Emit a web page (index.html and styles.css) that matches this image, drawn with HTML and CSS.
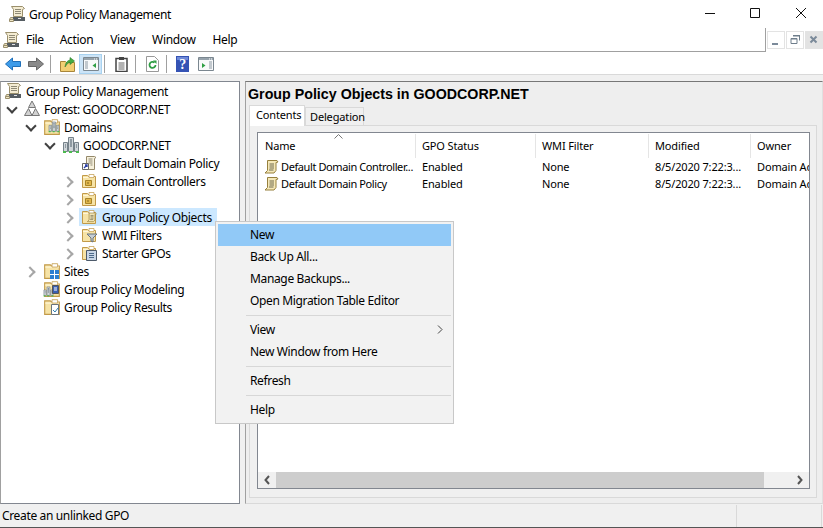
FILE: index.html
```html
<!DOCTYPE html>
<html lang="en">
<head>
  <meta charset="UTF-8" />
  <title>Group Policy Management</title>
  <link rel="stylesheet" href="styles.css">
</head>
<body>
  <svg class="defs" width="0" height="0">
    <symbol id="console" viewBox="0 0 16 16">
      <path d="M2.500.500h11l2 2-2 1v7H4.500V3.500z" fill="#f4ecd2" stroke="#9a8f6c"/>
      <path d="M6 3.500h6M6 5.500h6M6 7.500h6" stroke="#8f8a76"/>
      <path d="M.500 13.500l1-2h3v2z" fill="#e6dcb8" stroke="#9a8f6c"/>
      <path d="M4 11h12v4H4z" fill="#565d62"/>
      <path d="M.500 13.500h4v2h-4z" fill="#efe6c6" stroke="#9a8f6c"/>
      <path d="M9 12h3v1H9z" fill="#e4e4e4"/>
    </symbol>
    <symbol id="forest" viewBox="0 0 18 18">
      <path d="M9 1l3.500 6.500h-7zM5.500 8.500l3.500 7H1.500zM12.500 8.500l4 7H9z" fill="#d2d2d2" stroke="#777"/>
    </symbol>
    <symbol id="folder" viewBox="0 0 16 16">
      <path d="M1.500 2.500h5l1 1h7v11h-13z" fill="#f6e3a6" stroke="#c29a48"/>
      <path d="M2 4.500h12" stroke="#fff6d8"/>
      <path d="M8 1.500h5v3H8z" fill="#fff" stroke="#c29a48" stroke-width=".7"/>
    </symbol>
    <symbol id="servers" viewBox="0 0 18 18">
      <path d="M6.500 1.500h5v14h-5zM1.500 6.500h4v9h-4zM12.500 6.500h4v9h-4z" fill="#cfd5d9" stroke="#76828a"/>
      <path d="M8 4h2M8 6h2M8 8h2M8 10h2M3 9h1M3 11h1M14 9h1M14 11h1" stroke="#4f5e6a"/>
      <path d="M1 15h3v2H1zM7 15h3v2H7zM14 15h3v2h-3z" fill="#4cbb4f"/>
    </symbol>
    <symbol id="policy-link" viewBox="0 0 16 16">
      <path d="M5.500 1.500h8l1.500 1-1.500 1v11h-8z" fill="#f7f1dc" stroke="#94886a"/>
      <path d="M7.500 4h4M7.500 6h4M7.500 8h4M9.500 10h2" stroke="#8f8a76"/>
      <path d="M1.500 8.500h6v6h-6z" fill="#fff" stroke="#666"/>
      <path d="M3 13l3-3M4 10h2v2" stroke="#2a3fa8" fill="none" stroke-width="1.300"/>
    </symbol>
    <symbol id="scroll" viewBox="0 0 16 16">
      <path d="M4.500 1.500h9.500l1 1.500-2 .500v8l-2 2.500H2l2.500-2.500z" fill="#f5e8b8" stroke="#96803e"/>
      <path d="M6.500 5h4.500M6.500 7h4.500M6.500 9h4.500M6 11h4.500" stroke="#6f6a50"/>
    </symbol>
    <symbol id="up-folder" viewBox="0 0 16 16">
      <path d="M.500 5.500h5l1 1h8v9H.500z" fill="#f2cf74" stroke="#a9863a"/>
      <path d="M5 11q.500-6 5-7V1.500L14.500 5 10 8.500V6q-3 1-5 5z" fill="#46ad42" stroke="#2a7a2c" stroke-width=".6"/>
    </symbol>
    <symbol id="window-pane" viewBox="0 0 16 14">
      <path d="M.500.500h15v13H.500z" fill="#f8f9fa" stroke="#7b8790"/>
      <path d="M1 1h14v2H1z" fill="#97a3ac"/>
      <path d="M11 2h1M13 2h1" stroke="#fff"/>
    </symbol>
  </svg>

  <header class="titlebar">
    <svg class="icon title-icon"><use href="#console"/></svg>
    <span class="title-text">Group Policy Management</span>
    <div class="win-buttons">
      <svg width="46" height="28" viewBox="0 0 46 28"><path d="M20 13.500h10" stroke="#111"/></svg>
      <svg width="46" height="28" viewBox="0 0 46 28"><path d="M19.500 8.500h9v9h-9z" fill="none" stroke="#111"/></svg>
      <svg width="46" height="28" viewBox="0 0 46 28"><path d="M19 8l10 10M29 8L19 18" stroke="#111"/></svg>
    </div>
  </header>

  <div class="menubar">
    <nav class="menu">
      <svg class="icon menu-icon"><use href="#console"/></svg>
      <span class="menu-item menu-file">File</span>
      <span class="menu-item">Action</span>
      <span class="menu-item">View</span>
      <span class="menu-item">Window</span>
      <span class="menu-item">Help</span>
    </nav>
    <div class="mdi-buttons">
      <span class="mdi"><svg width="16" height="16" viewBox="0 0 16 16"><path d="M4 11h6v2H4z" fill="#7b8a9a"/></svg></span>
      <span class="mdi"><svg width="16" height="16" viewBox="0 0 16 16"><path d="M6.500 3.500h6v5M4 6.500h6v5H4z" fill="none" stroke="#6f7e8c"/><path d="M4 6h6v1.500H4zM6 3h7v1.500H6z" fill="#6f7e8c"/></svg></span>
      <span class="mdi mdi-close"><svg width="16" height="16" viewBox="0 0 16 16"><path d="M4.500 4.500l6 6M10.500 4.500l-6 6" stroke="#7b8a9a" stroke-width="2"/></svg></span>
    </div>
  </div>

  <div class="toolbar">
    <svg class="tool" width="16" height="16" viewBox="0 0 16 16"><path d="M7.500 2v3.500h8v5h-8V14L.500 8z" fill="#3d9be9" stroke="#1f6fb8"/></svg>
    <svg class="tool" width="16" height="16" viewBox="0 0 16 16"><path d="M8.500 2v3.500h-8v5h8V14l7-6z" fill="#8a8a8a" stroke="#666"/></svg>
    <span class="tool-sep sep-a"></span>
    <svg class="tool tool-up" width="16" height="16"><use href="#up-folder"/></svg>
    <span class="tool-on">
      <svg width="16" height="14"><use href="#window-pane"/><path d="M2 5h3M2 7h3M2 9h3M2 11h3" stroke="#8d99a3"/><path d="M13 6v5L9.500 8.500z" fill="#2f9e44"/></svg>
    </span>
    <span class="tool-sep sep-b"></span>
    <svg class="tool" width="13" height="16" viewBox="0 0 13 16"><path d="M1 2.500h11v13H1z" fill="#fff" stroke="#444" stroke-width="1.500"/><path d="M4 1h5v3H4z" fill="#444"/><path d="M3.500 7h6M3.500 9h6M3.500 11h6M3.500 13h6" stroke="#666"/></svg>
    <span class="tool-sep sep-c"></span>
    <svg class="tool" width="13" height="16" viewBox="0 0 13 16"><path d="M.500.500h8l4 4v11H.500z" fill="#fff" stroke="#999"/><path d="M9.500 9a3 3 0 1 1-1-2.300" fill="none" stroke="#2f9e44" stroke-width="1.800"/><path d="M7 4.500h3.500V8z" fill="#2f9e44"/></svg>
    <span class="tool-sep sep-d"></span>
    <svg class="tool" width="13" height="16" viewBox="0 0 13 16"><path d="M0 0h13v16H0z" fill="#3553b4"/><path d="M1 1h11v3H1z" fill="#6f8ad8"/><text x="6.500" y="13" class="help-mark">?</text></svg>
    <svg class="tool pane-right" width="16" height="14"><use href="#window-pane"/><path d="M11 5h3M11 7h3M11 9h3M11 11h3" stroke="#8d99a3"/><path d="M4 6v5l3.500-2.500z" fill="#2f9e44"/></svg>
  </div>

  <main class="workspace">
    <section class="tree">
      <div class="row"><i class="tw"></i><svg class="icon"><use href="#console"/></svg><span class="label">Group Policy Management</span></div>
      <div class="row l1"><i class="tw open"></i><svg class="icon wide"><use href="#forest"/></svg><span class="label">Forest: GOODCORP.NET</span></div>
      <div class="row l2"><i class="tw open"></i><svg class="icon wide"><use href="#folder"/><use href="#servers" x="5" y="3" width="12" height="12"/></svg><span class="label">Domains</span></div>
      <div class="row l3"><i class="tw open"></i><svg class="icon wide"><use href="#servers"/></svg><span class="label">GOODCORP.NET</span></div>
      <div class="row l4"><i class="tw none"></i><svg class="icon"><use href="#policy-link"/></svg><span class="label">Default Domain Policy</span></div>
      <div class="row l4"><i class="tw"></i><svg class="icon"><use href="#folder"/><path d="M4.500 7.500h6v5h-6z" fill="#e0b64a" stroke="#a88428"/><path d="M6.500 9l1 1-1 1" fill="none" stroke="#6b5312" stroke-width=".8"/></svg><span class="label">Domain Controllers</span></div>
      <div class="row l4"><i class="tw"></i><svg class="icon"><use href="#folder"/><path d="M4.500 7.500h6v5h-6z" fill="#e0b64a" stroke="#a88428"/><path d="M6.500 9l1 1-1 1" fill="none" stroke="#6b5312" stroke-width=".8"/></svg><span class="label">GC Users</span></div>
      <div class="row l4 selected"><i class="tw"></i><svg class="icon"><use href="#folder"/><use href="#scroll" x="5" y="3" width="11" height="11"/></svg><span class="label">Group Policy Objects</span></div>
      <div class="row l4"><i class="tw"></i><svg class="icon"><use href="#folder"/><path d="M6 7h10l-4 4v4l-2-1v-3z" fill="#c7ced4" stroke="#6a747c"/></svg><span class="label">WMI Filters</span></div>
      <div class="row l4"><i class="tw"></i><svg class="icon"><use href="#folder"/><path d="M5.500 5.500h10v10h-10z" fill="#c9d6e6" stroke="#4d5a6a"/><path d="M8 8.500h5M8 10.500h5M8 12.500h5" stroke="#4d6a8a"/></svg><span class="label">Starter GPOs</span></div>
      <div class="row l2"><i class="tw"></i><svg class="icon wide"><use href="#folder"/><path d="M7 8h9v9H7z" fill="#2d7fd0"/><path d="M11.500 8v9M7 12.500h9" stroke="#fff"/></svg><span class="label">Sites</span></div>
      <div class="row l2"><i class="tw none"></i><svg class="icon wide"><use href="#folder"/><use href="#servers" x="0" y="6" width="11" height="11"/><path d="M9.500 5.500h6v8h-6z" fill="#3b5fb0" stroke="#555"/><path d="M11 8h3M11 10h3" stroke="#fff"/></svg><span class="label">Group Policy Modeling</span></div>
      <div class="row l2"><i class="tw none"></i><svg class="icon wide"><use href="#folder"/><path d="M8.500 6.500h7v10h-7z" fill="#fff" stroke="#6a747c"/><path d="M10 12l2 2 3-4" fill="none" stroke="#2f7fb0"/></svg><span class="label">Group Policy Results</span></div>
    </section>

    <section class="details">
      <h1 class="details-title">Group Policy Objects in GOODCORP.NET</h1>
      <div class="tabs">
        <span class="tab tab-active">Contents</span>
        <span class="tab">Delegation</span>
      </div>
      <div class="tab-panel">
        <div class="list">
          <div class="list-head">
            <span class="col">Name<svg class="sort" width="9" height="5" viewBox="0 0 9 5"><path d="M.500 4.500l4-4 4 4" fill="none" stroke="#777"/></svg></span>
            <span class="col">GPO Status</span>
            <span class="col">WMI Filter</span>
            <span class="col">Modified</span>
            <span class="col">Owner</span>
          </div>
          <div class="list-body">
            <div class="list-row">
              <span class="cell name-cell"><svg class="icon"><use href="#scroll"/></svg>Default Domain Controller...</span>
              <span class="cell">Enabled</span>
              <span class="cell">None</span>
              <span class="cell">8/5/2020 7:22:3...</span>
              <span class="cell">Domain Ad</span>
            </div>
            <div class="list-row">
              <span class="cell name-cell"><svg class="icon"><use href="#scroll"/></svg>Default Domain Policy</span>
              <span class="cell">Enabled</span>
              <span class="cell">None</span>
              <span class="cell">8/5/2020 7:22:3...</span>
              <span class="cell">Domain Ad</span>
            </div>
          </div>
          <div class="hscroll">
            <svg width="18" height="16" viewBox="0 0 18 16"><path d="M11 4l-3.500 4 3.500 4" fill="none" stroke="#555" stroke-width="2"/></svg>
            <span class="thumb"></span>
            <svg width="18" height="16" viewBox="0 0 18 16"><path d="M8 4l3.500 4L8 12" fill="none" stroke="#555" stroke-width="2"/></svg>
          </div>
        </div>
      </div>
    </section>
  </main>

  <footer class="statusbar">
    <span class="status-text">Create an unlinked GPO</span>
    <span class="status-cell"></span>
  </footer>

  <div class="context-menu">
    <div class="cm-item cm-active">New</div>
    <div class="cm-item">Back Up All...</div>
    <div class="cm-item">Manage Backups...</div>
    <div class="cm-item">Open Migration Table Editor</div>
    <div class="cm-sep"></div>
    <div class="cm-item">View<svg class="cm-arrow" width="6" height="9" viewBox="0 0 6 9"><path d="M1 .500l4 4-4 4" fill="none" stroke="#444"/></svg></div>
    <div class="cm-item">New Window from Here</div>
    <div class="cm-sep"></div>
    <div class="cm-item">Refresh</div>
    <div class="cm-sep"></div>
    <div class="cm-item">Help</div>
  </div>
</body>
</html>
```

FILE: styles.css
```css
* {
  box-sizing: border-box;
}

html, body {
  margin: 0;
  height: 528px;
  overflow: hidden;
}

body {
  font-family: "Noto Sans", Arial, sans-serif;
  font-size: 12px;
  letter-spacing: -0.35px;
  color: #000;
  background: #fff;
  display: flex;
  flex-direction: column;
  position: relative;
}

.defs {
  position: absolute;
}

.icon {
  width: 16px;
  height: 16px;
  flex: none;
  overflow: visible;
}

.icon.wide {
  width: 18px;
  height: 18px;
}

/* title bar */
.titlebar {
  height: 28px;
  display: flex;
  align-items: center;
  padding-left: 9px;
  flex: none;
}

.title-text {
  margin-left: 4px;
}

.win-buttons {
  margin-left: auto;
  display: flex;
}

.win-buttons svg {
  display: block;
}

/* menu bar */
.menubar {
  height: 24px;
  display: flex;
  flex: none;
}

.menu {
  width: 766px;
  display: flex;
  align-items: center;
  padding-left: 3px;
  border-bottom: 1px solid #a0a0a0;
  border-right: 1px solid #a0a0a0;
}

.menu-icon {
  margin-right: 7px;
}

.menu-item {
  margin-right: 17px;
}

.menu-file {
  margin-right: 16px;
}

.mdi-buttons {
  display: flex;
  gap: 1px;
  padding: 3px 0 0 1px;
}

.mdi {
  width: 18px;
  height: 18px;
  border: 1px solid #e3e3e3;
  display: flex;
  align-items: center;
  justify-content: center;
}

.mdi svg {
  flex: none;
}

.mdi-close {
  background: #e3e3e3;
}

/* toolbar */
.toolbar {
  height: 23px;
  display: flex;
  align-items: center;
  padding: 1px 0 0 5px;
  border-bottom: 1px solid #d9d9d9;
  flex: none;
}

.tool {
  flex: none;
  margin-right: 7px;
}

.tool:nth-child(2) {
  margin-right: 6px;
}

.tool-sep {
  width: 1px;
  height: 18px;
  background: #a0a0a0;
  flex: none;
}

.sep-a {
  margin-right: 9px;
}

.sep-b {
  margin-left: 2px;
  margin-right: 10px;
}

.sep-c {
  margin-right: 10px;
}

.sep-d {
  margin-right: 9px;
}

.tool-up {
  margin-right: 3px;
}

.tool-on {
  width: 23px;
  height: 20px;
  background: #cce4f7;
  border: 1px solid #a8d2f0;
  display: flex;
  align-items: center;
  justify-content: center;
  flex: none;
}

.pane-right {
  margin-left: 2px;
}

.help-mark {
  font-family: "Liberation Serif", serif;
  font-size: 14px;
  font-weight: bold;
  fill: #fff;
  text-anchor: middle;
}

/* main area */
.workspace {
  height: 429px;
  flex: none;
  display: flex;
  background: #f0f0f0;
  padding-top: 6px;
}

.tree {
  width: 240px;
  flex: none;
  background: #fff;
  border: 1px solid #828790;
  border-left-color: #a0a0a0;
}

.row {
  height: 18px;
  display: flex;
  align-items: center;
  white-space: nowrap;
}

.tw {
  width: 9px;
  height: 9px;
  flex: none;
  position: relative;
}

.tw::before {
  content: "";
  position: absolute;
  width: 6px;
  height: 6px;
  left: 0;
  top: 1px;
  border-right: 2px solid #a6a6a6;
  border-top: 2px solid #a6a6a6;
  transform: rotate(45deg);
}

.tw.open::before {
  left: 1px;
  top: -1px;
  border-color: #404040;
  transform: rotate(135deg);
}

.tw.none::before {
  display: none;
}

.label {
  margin-left: 3px;
}

.row:first-child .tw {
  display: none;
}

.row:first-child .icon {
  margin-left: 4px;
}

.row:first-child .label {
  margin-left: 5px;
}

.l1 .tw { margin-left: 6px; }
.l1 .icon { margin-left: 7px; }
.l2 .tw { margin-left: 25px; }
.l2 .icon { margin-left: 8px; }
.l3 .tw { margin-left: 44px; }
.l3 .icon { margin-left: 8px; }
.l4 .tw { margin-left: 63px; }
.l4 .icon { margin-left: 8px; }

.l4 .label {
  margin-left: 5px;
}

.selected {
  position: relative;
}

.selected::before {
  content: "";
  position: absolute;
  left: 78px;
  width: 138px;
  top: 0;
  bottom: 0;
  background: #cce8ff;
}

.selected > * {
  position: relative;
}

/* right pane */
.details {
  flex: 1;
  margin-left: 5px;
  border-top: 1px solid #777;
  border-left: 1px solid #a0a0a0;
  border-right: 1px solid #e0e0e0;
  border-bottom: 1px solid #d9d9d9;
  background: #eee;
  padding-left: 2px;
  min-width: 0;
  display: flex;
  flex-direction: column;
}

.details-title {
  margin: 0;
  height: 22px;
  line-height: 25px;
  font-family: "Liberation Sans", Arial, sans-serif;
  font-size: 14.25px;
  font-weight: bold;
  letter-spacing: 0;
}

.tabs {
  display: flex;
  align-items: flex-end;
  height: 21px;
  padding-left: 1px;
  flex: none;
  font-size: 11px;
  letter-spacing: -0.15px;
}

.tab {
  width: 59px;
  height: 18px;
  line-height: 17px;
  padding-left: 4px;
  border: 1px solid #d9d9d9;
  border-bottom: 0;
  background: #f0f0f0;
}

.tab-active {
  width: 56px;
  height: 21px;
  line-height: 18px;
  padding-left: 6px;
  background: #fff;
  margin-bottom: -1px;
  position: relative;
}

.tab-panel {
  flex: 1;
  margin: 0 5px 5px 1px;
  border: 1px solid #d9d9d9;
  padding: 6px 6px 8px 7px;
  background: #f0f0f0;
  min-height: 0;
  display: flex;
}

.list {
  flex: 1;
  background: #fff;
  border: 1px solid #828790;
  display: flex;
  flex-direction: column;
  min-width: 0;
  font-size: 11px;
  letter-spacing: -0.15px;
}

.list-head,
.list-row {
  display: grid;
  grid-template-columns: 158px 120px 113px 102px 70px;
  white-space: nowrap;
  overflow: hidden;
}

.list-head {
  height: 25px;
  flex: none;
}

.col {
  padding-left: 6px;
  padding-top: 4px;
  margin-top: 1px;
  border-right: 1px solid #e5e5e5;
  position: relative;
}

.col:first-child {
  padding-left: 7px;
}

.col:last-child {
  border-right: 0;
}

.sort {
  position: absolute;
  left: 76px;
  top: 0;
}

.list-body {
  flex: 1;
}

.list-row {
  height: 17px;
  align-items: center;
}

.cell {
  padding-left: 6px;
  overflow: hidden;
}

.name-cell {
  display: flex;
  align-items: center;
  gap: 2px;
  padding-left: 5px;
  letter-spacing: -0.4px;
}

.hscroll {
  height: 16px;
  display: flex;
  background: #f0f0f0;
  flex: none;
}

.thumb {
  width: 488px;
  background: #cdcdcd;
}

.hscroll svg:last-child {
  margin-left: auto;
  margin-right: 1px;
}

/* status bar */
.statusbar {
  height: 24px;
  flex: none;
  display: flex;
  background: #f0f0f0;
  border-bottom: 1px solid #555;
  padding: 1px 0 0 2px;
}

.status-text {
  width: 735px;
  border-right: 1px solid #d9d9d9;
  line-height: 22px;
}

.status-cell {
  width: 85px;
  border-right: 1px solid #d9d9d9;
}

/* context menu */
.context-menu {
  position: absolute;
  left: 215px;
  top: 221px;
  width: 239px;
  height: 203px;
  background: #f2f2f2;
  border: 1px solid #c8c8c8;
  padding: 2px;
}

.cm-item {
  height: 22px;
  line-height: 21px;
  padding-left: 32px;
  position: relative;
}

.cm-active {
  background: #91c9f7;
}

.cm-sep {
  height: 7px;
  margin-left: 28px;
  position: relative;
}

.cm-sep::before {
  content: "";
  position: absolute;
  left: 0;
  right: 0;
  top: 3px;
  border-top: 1px solid #d7d7d7;
}

.cm-arrow {
  position: absolute;
  right: 8px;
  top: 6px;
}
```
